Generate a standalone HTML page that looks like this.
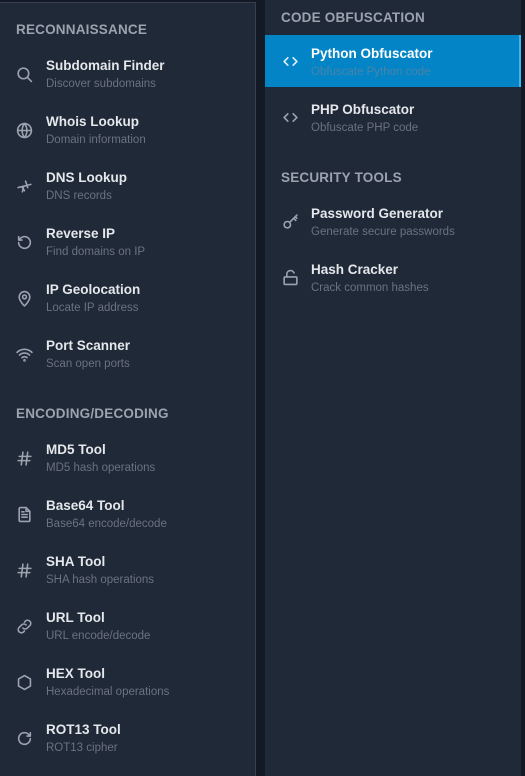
<!DOCTYPE html>
<html><head><meta charset="utf-8"><style>
*{margin:0;padding:0;box-sizing:border-box}
body{width:525px;height:776px;background:#131a26;font-family:"Liberation Sans",sans-serif;position:relative;overflow:hidden}
.lp{position:absolute;left:0;top:2px;width:256px;height:774px;background:#1f2937;border-top:1px solid #354052;border-right:1px solid #354052}
.rp{position:absolute;left:265px;top:0;width:256px;height:776px;background:#1f2937}
.h{position:absolute;font-size:13.5px;font-weight:bold;color:#9ca3af;letter-spacing:.2px;line-height:16px;margin-top:1px}
.t{position:absolute;font-size:13.5px;font-weight:bold;color:#e5e7eb;line-height:16px;margin-top:1px}
.d{position:absolute;font-size:11.5px;color:#6b7280;line-height:14px;margin-top:1px}
svg{position:absolute;width:17px;height:17px;margin:-0.5px 0 0 -0.5px;fill:none;stroke:#9ca3af;stroke-width:1.5;stroke-linecap:round;stroke-linejoin:round}
.act{position:absolute;left:265px;top:35px;width:256px;height:52px;background:#0284c7;border-right:2px solid #3fb6ef}
</style></head><body>
<div class="lp"></div><div class="rp"></div><div class="act"></div>

<div class="h" style="left:16px;top:21px">RECONNAISSANCE</div>
<div class="h" style="left:16px;top:405px">ENCODING/DECODING</div>
<div class="h" style="left:281px;top:9px">CODE OBFUSCATION</div>
<div class="h" style="left:281px;top:169px">SECURITY TOOLS</div>

<svg style="left:16px;top:66px" viewBox="0 0 16 16"><circle cx="7" cy="7" r="5"/><path d="M11 11l3.5 3.5"/></svg>
<div class="t" style="left:46px;top:57px">Subdomain Finder</div><div class="d" style="left:46px;top:76px">Discover subdomains</div>

<svg style="left:16px;top:122px" viewBox="0 0 16 16"><circle cx="8" cy="8" r="6.5"/><path d="M1.5 8h13M8 1.5c-3 3.5-3 9.5 0 13M8 1.5c3 3.5 3 9.5 0 13"/></svg>
<div class="t" style="left:46px;top:113px">Whois Lookup</div><div class="d" style="left:46px;top:132px">Domain information</div>

<svg style="left:16px;top:178px" viewBox="0 0 16 16"><path d="M2 9l12-3M6 13l1-4M9 3l1 3M6 9l2 3M10 6l1 3"/></svg>
<div class="t" style="left:46px;top:169px">DNS Lookup</div><div class="d" style="left:46px;top:188px">DNS records</div>

<svg style="left:16px;top:234px" viewBox="0 0 16 16"><path d="M2.5 8a5.5 5.5 0 1 0 1.6-3.9L2.5 5.7M2.5 2.5v3.2h3.2"/></svg>
<div class="t" style="left:46px;top:225px">Reverse IP</div><div class="d" style="left:46px;top:244px">Find domains on IP</div>

<svg style="left:16px;top:290px" viewBox="0 0 16 16"><path d="M8 15s5-4.5 5-8.5a5 5 0 0 0-10 0C3 10.5 8 15 8 15z"/><circle cx="8" cy="6.5" r="1.8"/></svg>
<div class="t" style="left:46px;top:281px">IP Geolocation</div><div class="d" style="left:46px;top:300px">Locate IP address</div>

<svg style="left:16px;top:346px" viewBox="0 0 16 16"><path d="M1 6a10 10 0 0 1 14 0M3.3 8.5a7 7 0 0 1 9.4 0M5.6 11a3.5 3.5 0 0 1 4.8 0"/><circle cx="8" cy="13.5" r=".5"/></svg>
<div class="t" style="left:46px;top:337px">Port Scanner</div><div class="d" style="left:46px;top:356px">Scan open ports</div>

<svg style="left:16px;top:450px" viewBox="0 0 16 16"><path d="M3 6h11M2 10h11M6.5 2l-1.5 12M11 2l-1.5 12"/></svg>
<div class="t" style="left:46px;top:441px">MD5 Tool</div><div class="d" style="left:46px;top:460px">MD5 hash operations</div>

<svg style="left:16px;top:506px" viewBox="0 0 16 16"><path d="M9.5 1.5H4a1 1 0 0 0-1 1v11a1 1 0 0 0 1 1h8a1 1 0 0 0 1-1V5z"/><path d="M9.5 1.5V5H13M5.5 8h5M5.5 10.5h5M5.5 5.5h2"/></svg>
<div class="t" style="left:46px;top:497px">Base64 Tool</div><div class="d" style="left:46px;top:516px">Base64 encode/decode</div>

<svg style="left:16px;top:562px" viewBox="0 0 16 16"><path d="M3 6h11M2 10h11M6.5 2l-1.5 12M11 2l-1.5 12"/></svg>
<div class="t" style="left:46px;top:553px">SHA Tool</div><div class="d" style="left:46px;top:572px">SHA hash operations</div>

<svg style="left:16px;top:618px" viewBox="0 0 16 16"><path d="M6.5 9.5a3 3 0 0 0 4.2 0l2.6-2.6a3 3 0 0 0-4.2-4.2L8 3.8M9.5 6.5a3 3 0 0 0-4.2 0L2.7 9.1a3 3 0 0 0 4.2 4.2L8 12.2"/></svg>
<div class="t" style="left:46px;top:609px">URL Tool</div><div class="d" style="left:46px;top:628px">URL encode/decode</div>

<svg style="left:16px;top:674px" viewBox="0 0 16 16"><path d="M8 1.5l5.6 3.2v6.6L8 14.5l-5.6-3.2V4.7z"/></svg>
<div class="t" style="left:46px;top:665px">HEX Tool</div><div class="d" style="left:46px;top:684px">Hexadecimal operations</div>

<svg style="left:16px;top:730px" viewBox="0 0 16 16"><path d="M13.5 8a5.5 5.5 0 1 1-1.6-3.9l1.6 1.6M13.5 2.5v3.2h-3.2"/></svg>
<div class="t" style="left:46px;top:721px">ROT13 Tool</div><div class="d" style="left:46px;top:740px">ROT13 cipher</div>

<svg style="left:282px;top:53px;stroke:#e0f2fe" viewBox="0 0 16 16"><path d="M5.5 4.5L2 8l3.5 3.5M10.5 4.5L14 8l-3.5 3.5"/></svg>
<div class="t" style="left:311px;top:45px;color:#fff">Python Obfuscator</div><div class="d" style="left:311px;top:64px;color:#4b83a8">Obfuscate Python code</div>

<svg style="left:282px;top:109px" viewBox="0 0 16 16"><path d="M5.5 4.5L2 8l3.5 3.5M10.5 4.5L14 8l-3.5 3.5"/></svg>
<div class="t" style="left:311px;top:101px">PHP Obfuscator</div><div class="d" style="left:311px;top:120px">Obfuscate PHP code</div>

<svg style="left:282px;top:213px" viewBox="0 0 16 16"><circle cx="5" cy="11" r="3"/><path d="M7.2 8.8L14 2M11 5l2 2M12.5 3.5l1.5 1.5"/></svg>
<div class="t" style="left:311px;top:205px">Password Generator</div><div class="d" style="left:311px;top:224px">Generate secure passwords</div>

<svg style="left:282px;top:269px" viewBox="0 0 16 16"><rect x="2" y="7.5" width="12" height="7" rx="1"/><path d="M4.5 7.5V5a3.5 3.5 0 0 1 6.8-1.2"/></svg>
<div class="t" style="left:311px;top:261px">Hash Cracker</div><div class="d" style="left:311px;top:280px">Crack common hashes</div>
</body></html>
